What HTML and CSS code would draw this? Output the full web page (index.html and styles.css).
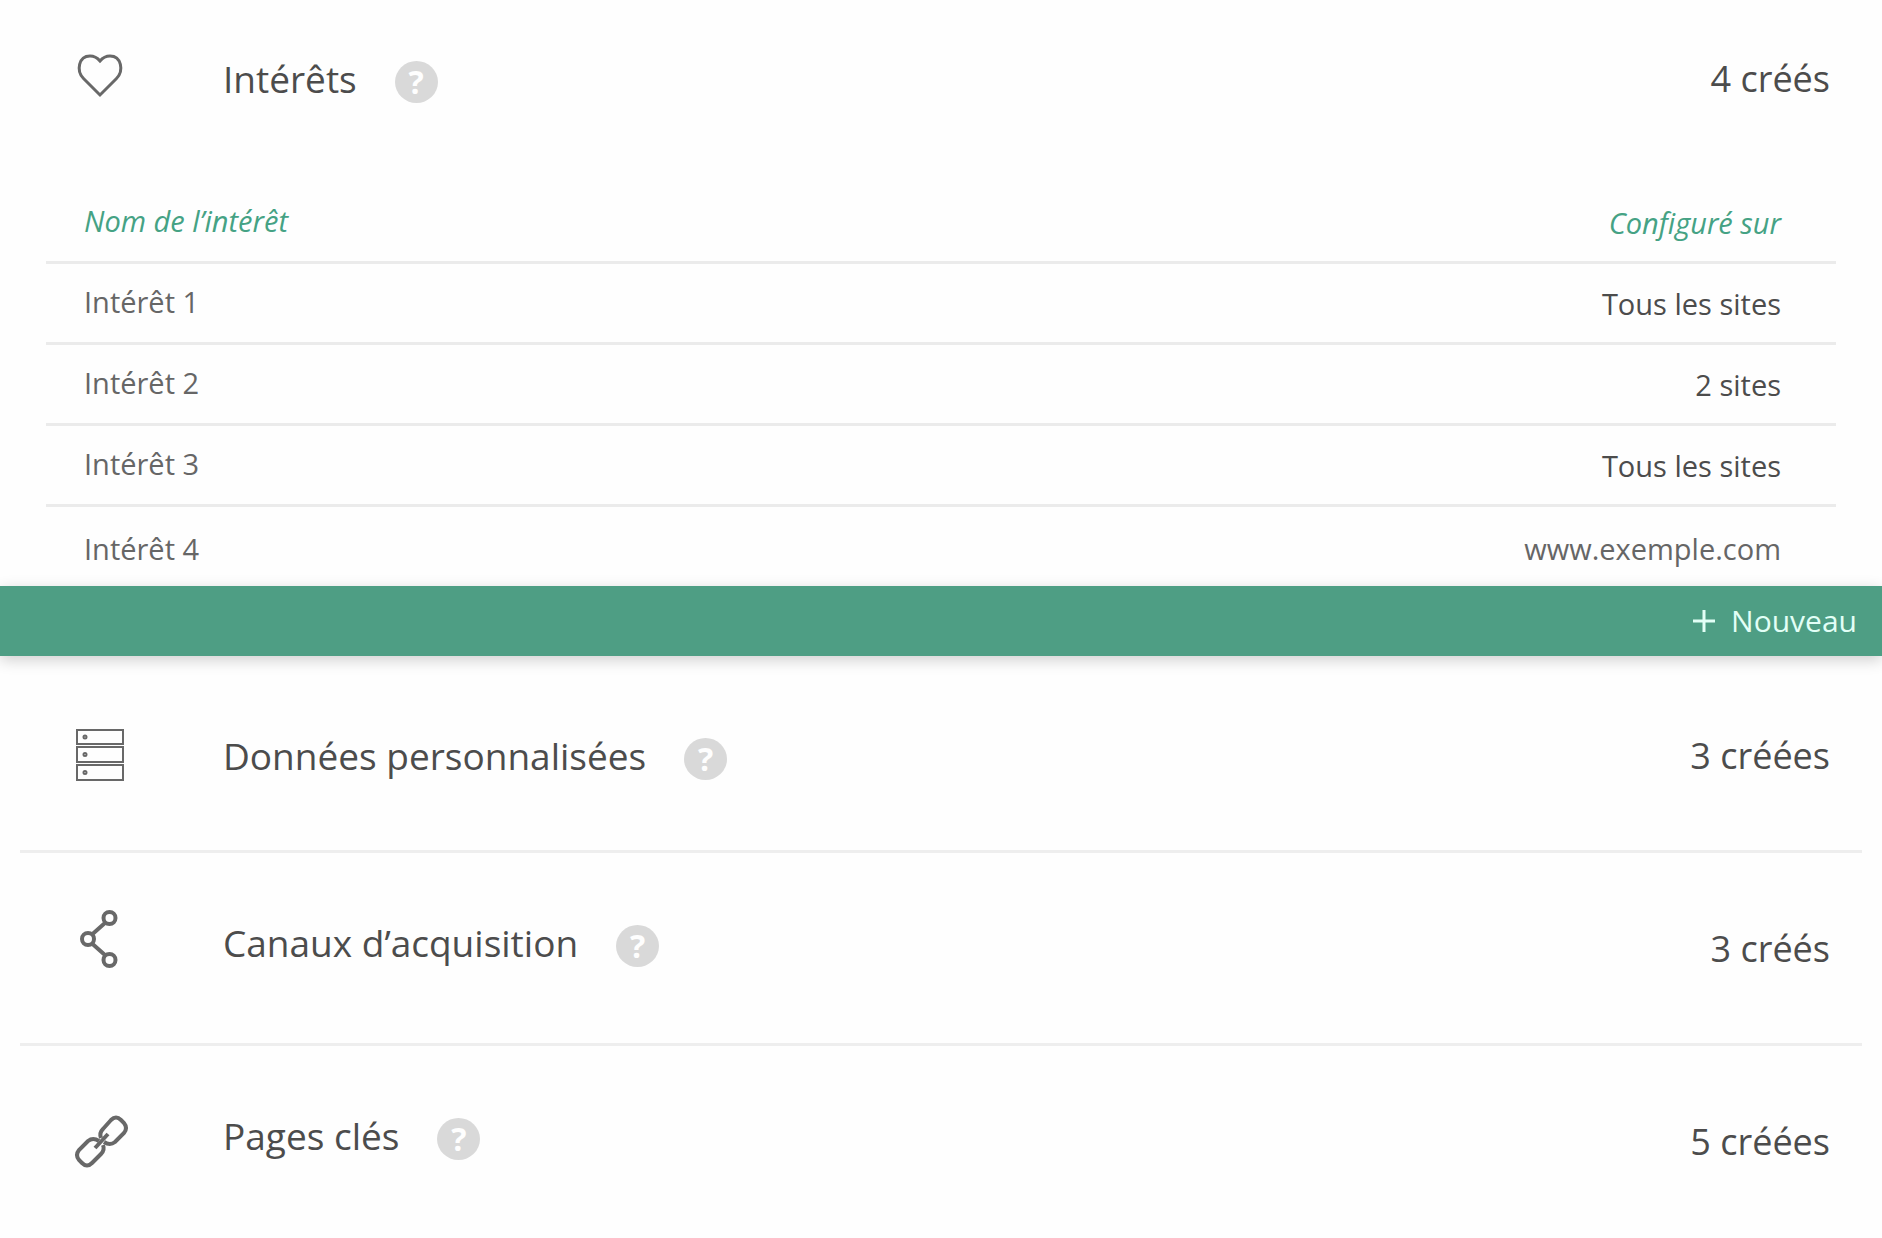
FILE: index.html
```html
<!DOCTYPE html>
<html lang="fr">
<head>
<meta charset="utf-8">
<meta name="viewport" content="width=device-width, initial-scale=1">
<title>Configuration</title>
<link rel="stylesheet" href="styles.css">
</head>
<body>
<main class="settings">
  <section class="panel">
    <header class="section section--open">
      <svg class="section-icon" viewBox="0 0 56 60" aria-hidden="true"><path d="M28 46 L11.500 29.500 C4 22 6.500 7 18 7 C22.500 7 25.500 9 28 12 C30.500 9 33.500 7 38 7 C49.500 7 52 22 44.500 29.500 Z"/></svg>
      <h2 class="section-title">Intérêts</h2>
      <button class="help" type="button" aria-label="Aide sur les intérêts">?</button>
      <span class="section-count">4 créés</span>
    </header>
    <table class="items">
      <thead>
        <tr><th scope="col">Nom de l’intérêt</th><th scope="col">Configuré sur</th></tr>
      </thead>
      <tbody>
        <tr><td>Intérêt 1</td><td>Tous les sites</td></tr>
        <tr><td>Intérêt 2</td><td>2 sites</td></tr>
        <tr><td>Intérêt 3</td><td>Tous les sites</td></tr>
        <tr><td>Intérêt 4</td><td class="domain">www.exemple.com</td></tr>
      </tbody>
    </table>
    <div class="actions">
      <button class="add" type="button"><svg class="add-icon" viewBox="0 0 22 22" aria-hidden="true"><path d="M11 0V22M0 11H22"/></svg>Nouveau</button>
    </div>
  </section>

  <section class="section">
    <svg class="section-icon section-icon--fine" viewBox="0 0 56 60" aria-hidden="true"><path d="M5 4H51V18H5ZM5 21H51V36H5ZM5 39H51V54H5Z"/><circle cx="13" cy="11" r="1.500"/><circle cx="13" cy="28.500" r="1.500"/><circle cx="13" cy="46.500" r="1.500"/></svg>
    <h2 class="section-title">Données personnalisées</h2>
    <button class="help" type="button" aria-label="Aide sur les données personnalisées">?</button>
    <span class="section-count">3 créées</span>
  </section>

  <section class="section section--raised">
    <svg class="section-icon section-icon--bold" viewBox="0 0 56 60" aria-hidden="true"><circle cx="37.500" cy="-1" r="6"/><circle cx="16" cy="20" r="6"/><circle cx="37.500" cy="41" r="6"/><path d="M33.500 3.500L20 15.500M20 24.500L33.500 36.500"/></svg>
    <h2 class="section-title">Canaux d’acquisition</h2>
    <button class="help" type="button" aria-label="Aide sur les canaux d’acquisition">?</button>
    <span class="section-count">3 créés</span>
  </section>

  <section class="section section--raised">
    <svg class="section-icon section-icon--bold" viewBox="0 0 56 60" aria-hidden="true"><path d="M23 36L36 22"/><path d="M29 26Q27 21 31 17L39 8Q44 3 49 8L52 11Q56 16 52 21L43 30Q38 34 32 30"/><path d="M31 33Q33 38 29 42L20 51Q15 56 10 51L7 48Q3 43 7 38L16 29Q21 25 27 29"/></svg>
    <h2 class="section-title">Pages clés</h2>
    <button class="help" type="button" aria-label="Aide sur les pages clés">?</button>
    <span class="section-count">5 créées</span>
  </section>
</main>
</body>
</html>
```
FILE: styles.css
```css
* { box-sizing: border-box; }

body {
  margin: 0;
  background: #fefefe;
  color: #4c4c4c;
  font-family: "Open Sans", "Noto Sans", sans-serif;
  font-size: 29px;
}

button {
  border: 0;
  padding: 0;
  font: inherit;
  cursor: pointer;
}

.section {
  display: flex;
  align-items: center;
  margin: 0 20px;
  padding: 70px 32px 64px 52px;
  line-height: 60px;
  border-bottom: 3px solid #eeeeee;
}

.section--raised {
  padding-top: 66px;
}

.section:last-child { border-bottom: 0; }

.section--open {
  padding-top: 49px;
  padding-bottom: 74px;
  border-bottom: 0;
}

.section-icon {
  flex: none;
  width: 56px;
  height: 60px;
  margin-right: 95px;
  overflow: visible;
  fill: none;
  stroke: #686868;
  stroke-width: 3;
}

.section-icon--fine { stroke-width: 2; }
.section-icon--bold { stroke-width: 4; }

.section-title {
  margin: 0 38px 0 0;
  font-size: 37px;
  font-weight: 400;
}

.section--raised .section-title,
.section--raised .help { position: relative; bottom: 6px; }

.help {
  width: 43px;
  height: 42px;
  margin-top: 6px;
  border-radius: 50%;
  background: #d9d9d9;
  color: #fefefe;
  font-size: 32px;
  font-weight: 700;
  line-height: 42px;
}

.section-count {
  margin-left: auto;
  font-size: 36px;
}

.items {
  width: calc(100% - 92px);
  margin: 0 46px;
  border-collapse: collapse;
  line-height: 40px;
}

.items th,
.items td {
  padding: 20px 55px 18px 38px;
  text-align: right;
}

.items th:first-child,
.items td:first-child {
  padding-top: 18px;
  padding-bottom: 20px;
  text-align: left;
}

.items th {
  color: #45a284;
  font-style: italic;
  font-weight: 400;
}

.items tr { border-bottom: 3px solid #ebebeb; }
.items tbody tr:last-child { border-bottom: 0; }
.items tbody tr:last-child td { padding-top: 22px; padding-bottom: 17px; }
.items td:first-child,
.items .domain { color: #666666; }

.actions {
  display: flex;
  justify-content: flex-end;
  padding: 0 25px;
  background: #4e9e84;
  box-shadow: 0 4px 14px #00000030;
}

.add {
  display: flex;
  align-items: center;
  gap: 16px;
  background: none;
  color: #e2fff6;
  font-size: 30px;
  line-height: 70px;
}

.add-icon {
  width: 22px;
  height: 22px;
  stroke: currentColor;
  stroke-width: 3;
}
```
